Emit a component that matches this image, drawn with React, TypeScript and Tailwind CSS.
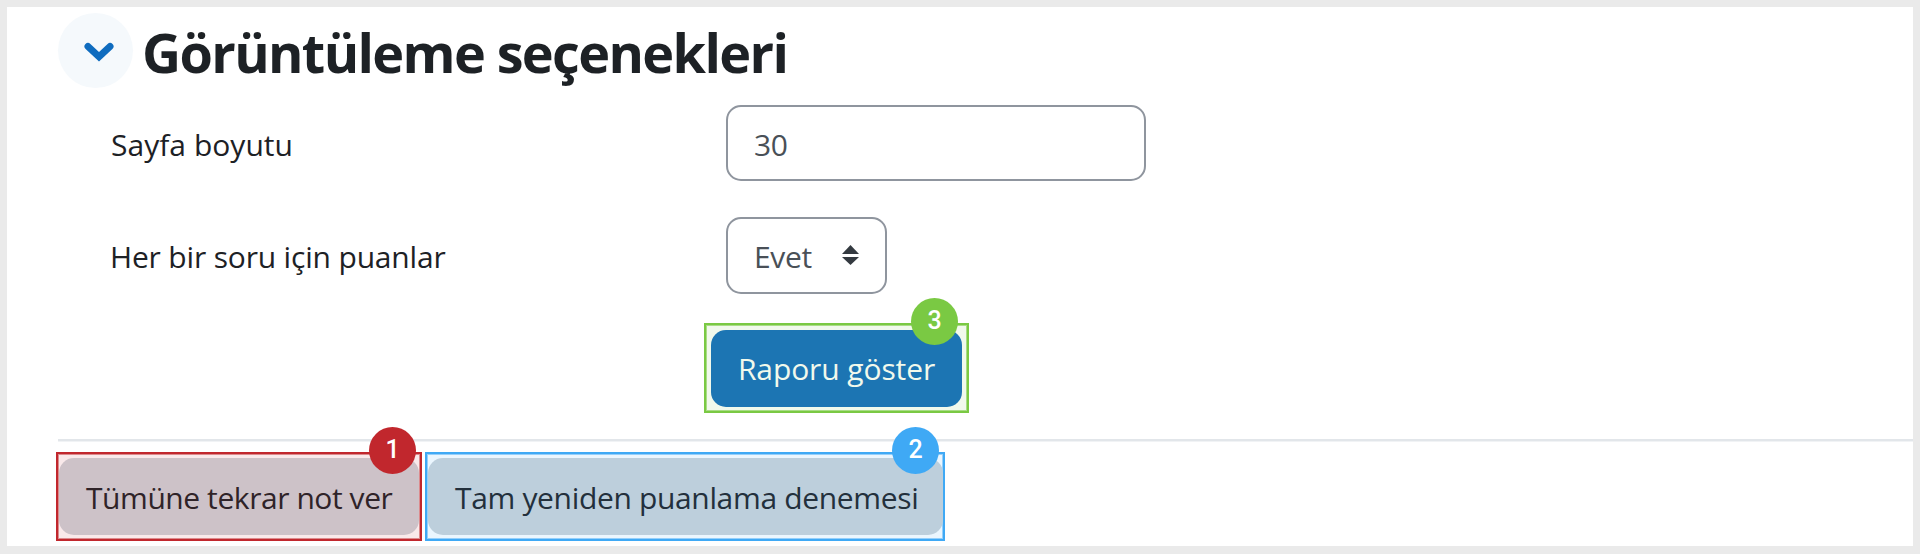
import type { ReactNode } from "react";

function Badge({ className, children }: { className: string; children: ReactNode }) {
  return (
    <span
      className={`absolute flex h-[47px] w-[47px] items-center justify-center rounded-full pb-[3px] font-['Roboto',sans-serif] text-[25px] leading-none font-medium text-white ${className}`}
    >
      {children}
    </span>
  );
}

function SortIcon() {
  return (
    <svg width="17" height="20" viewBox="0 0 17 20" className="mt-[1px] fill-[#343a40]">
      <path d="M8.5 0 L17 9 H0 Z" />
      <path d="M0 12 H17 L8.5 20 Z" />
    </svg>
  );
}

export default function App() {
  return (
    <div className="h-[554px] w-full overflow-hidden border-t-[7px] border-r-[7px] border-b-[8px] border-l-[7px] border-[#eaeaea] bg-white font-['Open_Sans','Noto_Sans',sans-serif] text-[30px] leading-[41px] whitespace-nowrap text-[#1d2125]">
      <header className="flex h-[97px] pt-[6px] pl-[51px]">
        <button className="flex h-[75px] w-[75px] items-center justify-center rounded-full bg-[#f5f9fc]">
          <svg width="32" height="22" viewBox="0 0 32 22" className="mt-[3px] ml-[6px]" fill="none">
            <path d="M5 5.5 L16 15.8 L27 5.5" stroke="#0f6cbf" strokeWidth="7" strokeLinecap="round" />
          </svg>
        </button>
        <h1 className="mt-[2px] ml-[9px] text-[54px] leading-[74px] font-bold tracking-[-1.64px]">
          Görüntüleme seçenekleri
        </h1>
      </header>

      <div className="flex h-[113px]">
        <label className="w-[719px] pt-[20px] pl-[104px] tracking-[0.03px]">Sayfa boyutu</label>
        <div className="mt-px h-[76px] w-[420px] rounded-[15px] border-2 border-[#8f959e] pt-[17px] pl-[26px] tracking-[-0.5px] text-[#495057]">
          30
        </div>
      </div>

      <div className="flex h-[106px]">
        <label className="w-[719px] pt-[19px] pl-[103px] tracking-[-0.17px]">Her bir soru için puanlar</label>
        <div className="flex h-[77px] w-[161px] rounded-[15px] border-2 border-[#8f959e] pt-[17px] pl-[26px] text-[#495057]">
          <span className="w-[88px] tracking-[-0.3px]">Evet</span>
          <span className="pt-[8px]">
            <SortIcon />
          </span>
        </div>
      </div>

      <div className="h-[116px] pl-[697px]">
        <div className="relative h-[90px] w-[265px] border-2 border-[#7ac943] bg-[#f1f9ec] pt-[5px] pl-[5px] shadow-[inset_0_0_0_1px_#a9dc86]">
          <button className="block h-[77px] w-[251px] rounded-[15px] bg-[#1c75b3] text-[#f1f9ec]">
            <span className="block h-[41px] tracking-[-0.1px]">Raporu göster</span>
          </button>
          <Badge className="top-[-27px] right-[9px] bg-[#7ac943]">3</Badge>
        </div>
      </div>

      <div className="ml-[51px] h-[13px] border-t-2 border-[#e2e6ea] shadow-[inset_0_1px_0_#f1f3f5]" />

      <div className="flex gap-[3px] pl-[49px]">
        <div className="relative h-[89px] w-[366px] border-2 border-[#c1272d] bg-[#f9e9ea] pt-1 pl-px shadow-[inset_0_0_0_1px_#dc8a8d]">
          <button className="block h-[77px] w-[360px] rounded-[15px] bg-[#cdc2c8] pt-[2px] pl-[27px] text-left text-[#2f2328]">
            <span className="block h-[41px] tracking-[-0.43px]">Tümüne tekrar not ver</span>
          </button>
          <Badge className="top-[-27px] right-[4px] bg-[#c1272d]">1</Badge>
        </div>
        <div className="relative h-[89px] w-[520px] border-2 border-[#3fa9f5] bg-[#ebf6fe] pt-1 pl-px shadow-[inset_0_0_0_1px_#95cffa]">
          <button className="block h-[77px] w-[515px] rounded-[15px] bg-[#bdcfdc] pt-[2px] pl-[27px] text-left text-[#23303c]">
            <span className="block h-[41px] tracking-[-0.34px]">Tam yeniden puanlama denemesi</span>
          </button>
          <Badge className="top-[-27px] right-[4px] bg-[#3fa9f5]">2</Badge>
        </div>
      </div>
    </div>
  );
}
